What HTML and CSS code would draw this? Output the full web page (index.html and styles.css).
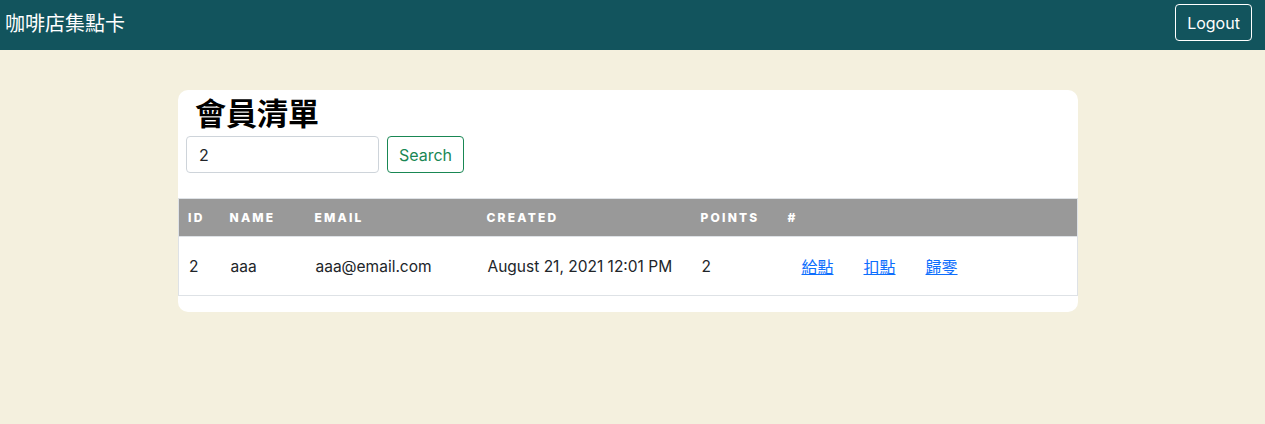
FILE: index.html
```html
<!DOCTYPE html>
<html lang="zh-Hant">
<head>
<meta charset="utf-8">
<title>咖啡店集點卡</title>
<link rel="stylesheet" href="styles.css">
</head>
<body>
<nav class="navbar">
  <span class="brand">咖啡店集點卡</span>
  <button class="logout">Logout</button>
</nav>
<main class="main">
  <section class="card">
    <div class="card-top">
      <h2 class="title">會員清單</h2>
      <form class="search">
        <input class="search-input" type="text" value="2">
        <button class="search-btn" type="button">Search</button>
      </form>
    </div>
    <table class="members">
      <colgroup>
        <col class="c-id"><col class="c-name"><col class="c-email"><col class="c-created"><col class="c-points"><col>
      </colgroup>
      <thead>
        <tr><th>ID</th><th>Name</th><th>Email</th><th>Created</th><th>Points</th><th>#</th></tr>
      </thead>
      <tbody>
        <tr>
          <td>2</td><td>aaa</td><td>aaa@email.com</td><td>August 21, 2021 12:01 PM</td><td>2</td>
          <td class="actions"><a href="#">給點</a><a href="#">扣點</a><a href="#">歸零</a></td>
        </tr>
      </tbody>
    </table>
  </section>
</main>
</body>
</html>
```
FILE: styles.css
```css
* { box-sizing: border-box; }
html, body { margin: 0; padding: 0; }
body {
  background: #f4f0de;
  font-family: Inter, "Noto Sans CJK TC", sans-serif;
  font-size: 16px;
  color: #212529;
  height: 424px;
}
.navbar {
  height: 50px;
  background: #12545d;
  display: flex;
  align-items: center;
  justify-content: space-between;
  padding: 0 13px 0 5px;
}
.brand {
  color: #fff;
  font-size: 20px;
  font-family: "Noto Sans CJK TC", sans-serif;
  margin-top: -6px;
}
.logout {
  background: transparent;
  color: #fff;
  border: 1px solid #fff;
  border-radius: 4px;
  font-family: Inter, sans-serif;
  font-size: 16px;
  height: 37px;
  width: 77px;
  margin-top: -5px;
  padding: 0;
}
.main {
  padding-top: 40px;
  display: flex;
  justify-content: center;
}
.card {
  width: 900px;
  background: #fff;
  border-radius: 10px;
  padding-bottom: 16px;
  overflow: hidden;
  margin-left: -9px;
}
.card-top {
  padding: 0 8px 25px 8px;
}
.title {
  margin: 0;
  padding-left: 9px;
  font-family: "Noto Sans CJK TC", sans-serif;
  font-size: 31px;
  font-weight: 700;
  line-height: 44px;
  color: #000;
  height: 46px;
}
.search {
  display: flex;
  gap: 8px;
  margin: 0;
}
.search-input {
  width: 193px;
  height: 37px;
  border: 1px solid #ced4da;
  border-radius: 4px;
  padding: 0 12px;
  font-family: Inter, sans-serif;
  font-size: 16px;
  color: #212529;
}
.search-btn {
  width: 77px;
  height: 37px;
  background: #fff;
  border: 1px solid #198754;
  border-radius: 4px;
  color: #198754;
  font-family: Inter, sans-serif;
  font-size: 16px;
  padding: 0;
}
.members {
  width: 100%;
  border-collapse: collapse;
  border: 1px solid #dee2e6;
}
.c-id { width: 42px; }
.c-name { width: 85px; }
.c-email { width: 172px; }
.c-created { width: 214px; }
.c-points { width: 87px; }
.members th {
  background: #999;
  color: #fff;
  text-transform: uppercase;
  font-size: 12px;
  font-weight: 800;
  letter-spacing: 2.2px;
  text-align: left;
  height: 38px;
  padding: 0 9px;
}
.members td {
  height: 59px;
  padding: 0 10px;
  font-size: 15.5px;
  border-top: 1px solid #dee2e6;
}
.actions a {
  color: #0d6efd;
  text-decoration: underline;
  font-family: "Noto Sans CJK TC", sans-serif;
  font-size: 16px;
  margin-right: 30px;
}
.actions a:first-child { margin-left: 13px; }
```
